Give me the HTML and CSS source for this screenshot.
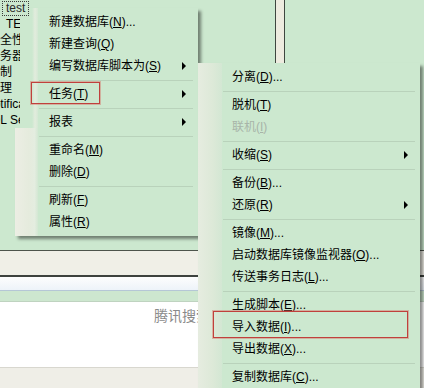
FILE: index.html
```html
<!DOCTYPE html>
<html>
<head>
<meta charset="utf-8">
<link rel="stylesheet" href="styles.css">
</head>
<body>
<div class="screen">
  <div class="top">
    <div class="tree">
      <div class="row row-sel"><span class="sel">test</span></div>
      <div class="row clip row-te">TEST</div>
      <div class="row clip shift12">安全性</div>
      <div class="row clip shift12">服务器对象</div>
      <div class="row clip shift12">复制</div>
      <div class="row clip shift12">管理</div>
      <div class="row clip shift15">Notification Services</div>
      <div class="row clip shift17">SQL Server 代理</div>
    </div>
    <div class="splitter"></div>
    <div class="pane"></div>
  </div>
  <div class="bar-a"></div>
  <div class="bar-b"></div>
  <div class="bar-c"></div>
  <div class="bar-d"><span class="search">腾讯搜索</span></div>
  <div class="bar-e"></div>

  <div class="menu menu1">
    <div class="strip">
      <div class="strip-top"></div>
      <div class="strip-bottom"></div>
    </div>
    <div class="content">
      <div class="item">新建数据库(<u>N</u>)...</div>
      <div class="item">新建查询(<u>Q</u>)</div>
      <div class="item">编写数据库脚本为(<u>S</u>)<span class="arrow"></span></div>
      <div class="sep"></div>
      <div class="item">任务(<u>T</u>)<span class="arrow"></span></div>
      <div class="sep"></div>
      <div class="item">报表<span class="arrow"></span></div>
      <div class="sep"></div>
      <div class="item">重命名(<u>M</u>)</div>
      <div class="item">删除(<u>D</u>)</div>
      <div class="sep"></div>
      <div class="item">刷新(<u>F</u>)</div>
      <div class="item">属性(<u>R</u>)</div>
    </div>
  </div>

  <div class="menu menu2">
    <div class="strip strip2"></div>
    <div class="content">
      <div class="item">分离(<u>D</u>)...</div>
      <div class="sep"></div>
      <div class="item">脱机(<u>T</u>)</div>
      <div class="item disabled">联机(<u>I</u>)</div>
      <div class="sep"></div>
      <div class="item">收缩(<u>S</u>)<span class="arrow"></span></div>
      <div class="sep"></div>
      <div class="item">备份(<u>B</u>)...</div>
      <div class="item">还原(<u>R</u>)<span class="arrow"></span></div>
      <div class="sep"></div>
      <div class="item">镜像(<u>M</u>)...</div>
      <div class="item">启动数据库镜像监视器(<u>O</u>)...</div>
      <div class="item">传送事务日志(<u>L</u>)...</div>
      <div class="sep"></div>
      <div class="item">生成脚本(<u>E</u>)...</div>
      <div class="item">导入数据(<u>I</u>)...</div>
      <div class="item">导出数据(<u>X</u>)...</div>
      <div class="sep"></div>
      <div class="item">复制数据库(<u>C</u>)...</div>
    </div>
  </div>

  <div class="mark mark1"></div>
  <div class="mark mark2"></div>
</div>
</body>
</html>
```
FILE: styles.css
```css
* { box-sizing: border-box; }
html, body { margin: 0; padding: 0; }
body {
  width: 424px;
  height: 388px;
  overflow: hidden;
  background: #cce8cf;
  font-family: "Liberation Sans", "Noto Sans CJK SC", sans-serif;
  font-size: 12px;
  color: #000;
}
.screen {
  position: relative;
  width: 424px;
  height: 388px;
  overflow: hidden;
  display: flex;
  flex-direction: column;
}
.top {
  height: 250px;
  display: flex;
  flex-shrink: 0;
}
.tree {
  width: 275px;
  line-height: 16px;
}
.row {
  height: 16px;
  white-space: nowrap;
}
.clip {
  width: 20px;
  overflow: hidden;
}
.row-te { padding-left: 6px; }
.shift12 { text-indent: -12px; }
.shift15 { text-indent: -15px; }
.shift17 { text-indent: -17px; }
.sel {
  display: inline-block;
  margin: 1px 0 0 2px;
  height: 15px;
  line-height: 13px;
  padding: 0 3px;
  border: 1px dotted #3a3a3a;
  color: #2a2a2a;
  vertical-align: top;
}
.splitter {
  width: 10px;
  background: #eeebdf;
  border-left: 1px solid #3f463f;
  border-right: 1px solid #3f463f;
}
.pane { flex: 1; }

.bar-a {
  height: 27px;
  flex-shrink: 0;
  background: #f0efe7;
  border-top: 1px solid #4d544c;
  border-bottom: 2px solid #3e423e;
}
.bar-b {
  height: 14px;
  flex-shrink: 0;
  background: linear-gradient(#fdfdfd, #edf3f9);
  border-bottom: 1px solid #b5c7d6;
}
.bar-c {
  height: 11px;
  flex-shrink: 0;
  background: #cde7cf;
  border-bottom: 1px solid #bfd3c0;
}
.bar-d {
  height: 65px;
  flex-shrink: 0;
  background: #fff;
  padding: 5px 0 0 154px;
}
.search {
  font-family: "Noto Sans CJK SC", sans-serif;
  font-size: 14px;
  line-height: 16px;
  color: #8a8a8a;
  white-space: nowrap;
}
.bar-e {
  flex: 1;
  background: #efeee7;
  border-top: 1px solid #d8d7cf;
}

.menu {
  position: absolute;
  display: flex;
  box-shadow: 3px 3px 3px rgba(0, 0, 0, 0.45);
}
.menu1 {
  left: 15px;
  top: 8px;
  width: 183px;
  height: 228px;
}
.menu2 {
  left: 198px;
  top: 63px;
  width: 222px;
  height: 340px;
}
.strip {
  width: 23px;
  display: flex;
  flex-direction: column;
}
.strip-top {
  height: 120px;
  background: linear-gradient(to right, rgba(230, 238, 226, 0) 0, rgba(230, 238, 226, 0) 17px, #e2ecdd 20px, #d4e8d4 23px);
}
.strip-bottom {
  flex: 1;
  background: linear-gradient(to right, #eceee4 0, #e5ebdd 60%, #e4ede0 85%, #d3e7d3 100%);
}
.strip2 {
  width: 24px;
  background: linear-gradient(to right, #e6ece0 0, #dde9d8 60%, #d3e7d3 100%);
}
.content {
  flex: 1;
  background: #cce8cf;
  padding: 3px 0;
}
.item {
  display: flex;
  align-items: center;
  height: 22px;
  padding-left: 11px;
  padding-right: 12px;
  white-space: nowrap;
  line-height: 22px;
}
.menu2 .item { padding-left: 10px; }
.item u {
  text-decoration: underline;
  text-underline-offset: 1px;
}
.disabled { color: #a8b4a9; }
.arrow {
  margin-left: auto;
  width: 0;
  height: 0;
  border-left: 4px solid #000;
  border-top: 4px solid transparent;
  border-bottom: 4px solid transparent;
}
.sep {
  height: 6px;
  display: flex;
  align-items: center;
  padding: 0 5px 0 1px;
}
.sep::after {
  content: "";
  flex: 1;
  height: 1px;
  background: #b9d2bb;
}

.mark {
  position: absolute;
  border: 1px solid #c0403c;
  box-shadow: 0 0 0 1px rgba(215, 110, 100, 0.45);
}
.mark1 {
  left: 31px;
  top: 82px;
  width: 69px;
  height: 22px;
}
.mark2 {
  left: 213px;
  top: 311px;
  width: 195px;
  height: 27px;
}
```
